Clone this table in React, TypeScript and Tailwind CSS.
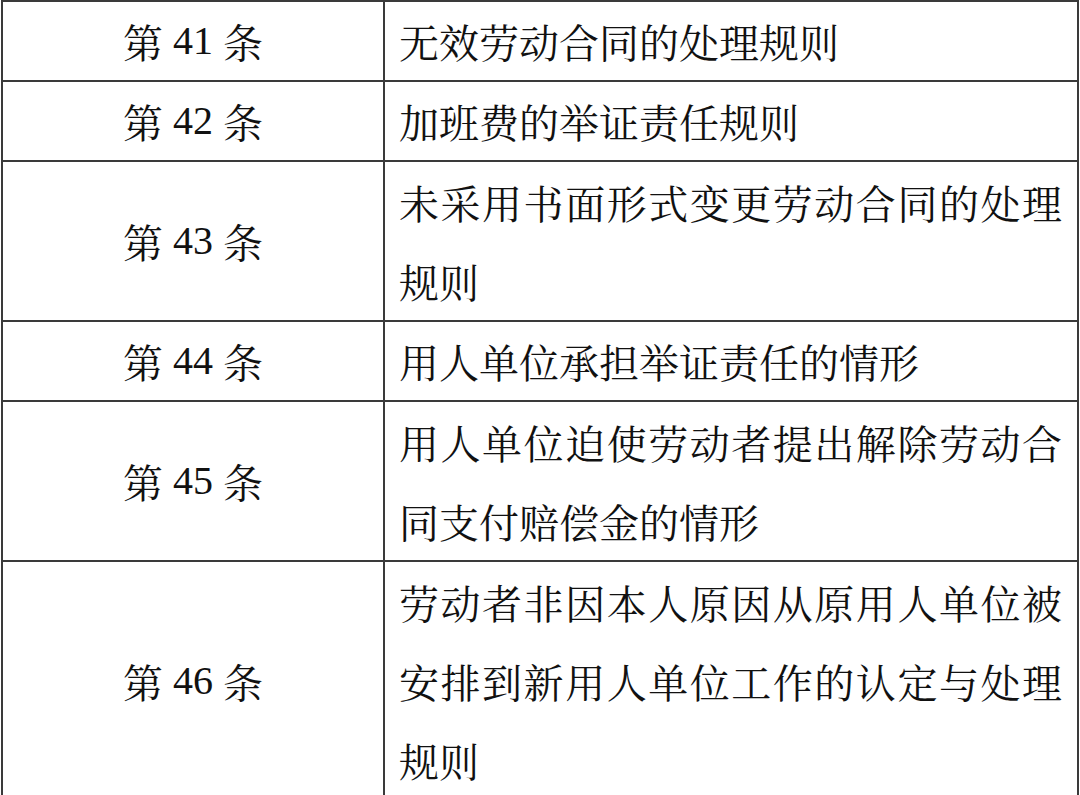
const rows: { no: string; text: string; multi?: boolean }[] = [
  { no: '41', text: '无效劳动合同的处理规则' },
  { no: '42', text: '加班费的举证责任规则' },
  { no: '43', text: '未采用书面形式变更劳动合同的处理规则', multi: true },
  { no: '44', text: '用人单位承担举证责任的情形' },
  { no: '45', text: '用人单位迫使劳动者提出解除劳动合同支付赔偿金的情形', multi: true },
  { no: '46', text: '劳动者非因本人原因从原用人单位被安排到新用人单位工作的认定与处理规则', multi: true },
];

const cjk = { fontFamily: '"Noto Serif CJK SC", "Noto Sans CJK SC", serif' };

export default function App() {
  return (
    <div className="h-[795px] w-[1080px] overflow-hidden bg-white">
      <div className="ml-[1px] w-[1078px] border-x-2 border-t-2 border-[#3a3a3a] text-[40px] text-[#111]">
        {rows.map((row) => (
          <div
            key={row.no}
            className="grid grid-cols-[382px_1fr] border-b-2 border-[#3a3a3a]"
          >
            <div className="flex items-center justify-center border-r-2 border-[#3a3a3a]">
              <span className="leading-[40px]" style={cjk}>第</span>
              <span
                className="px-[10px] font-serif leading-[40px]"
                style={{ fontFamily: 'Liberation Serif, DejaVu Serif, serif' }}
              >
                {row.no}
              </span>
              <span className="leading-[40px]" style={cjk}>条</span>
            </div>
            <p
              className={
                row.multi
                  ? 'pl-[14px] pr-[15px] text-justify leading-[79px]'
                  : 'pl-[14px] pr-[15px] text-justify leading-[78px]'
              }
              style={{ ...cjk, textJustify: 'inter-character' }}
            >
              {row.text}
            </p>
          </div>
        ))}
      </div>
    </div>
  );
}
